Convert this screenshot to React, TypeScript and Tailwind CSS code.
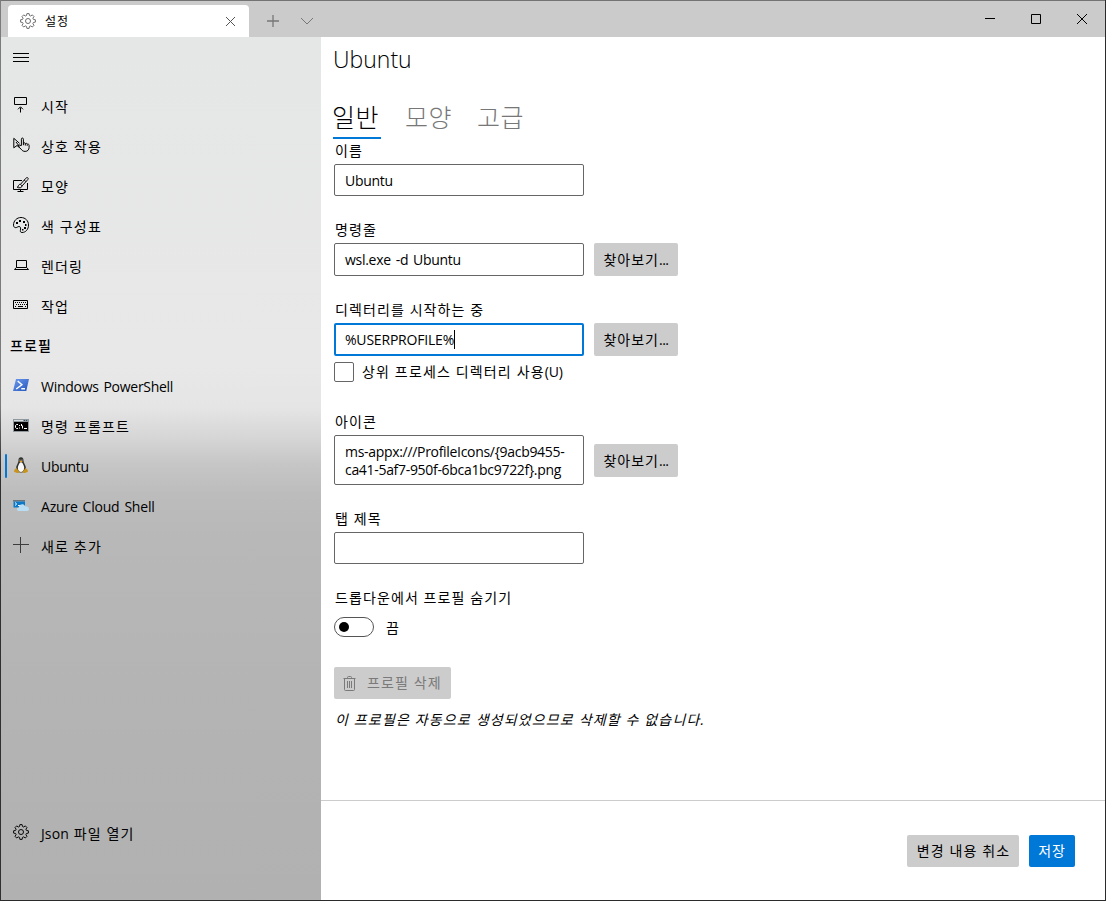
import type { ReactNode } from "react";

const Gear = () => (
  <svg width="16" height="16" viewBox="0 0 16 16" fill="none" stroke="currentColor" strokeWidth="0.95" strokeLinejoin="round">
    <path d="M6.9 .6h2.2l.4 1.9 1.2.5 1.6-1.1 1.7 1.7-1.1 1.6.5 1.2 2 .4v2.3l-2 .4-.5 1.2 1.1 1.6-1.7 1.7-1.6-1.1-1.2.5-.4 2H6.900l-.4-2-1.200-.5L3.700 14 2 12.300l1.100-1.600-.5-1.200-2-.4V6.800l2-.4.5-1.200L2 3.600l1.700-1.700L5.300 3l1.200-.5z" />
    <circle cx="8" cy="8" r="2.500" />
  </svg>
);

const Startup = () => (
  <svg width="16" height="16" viewBox="0 0 16 16" fill="none" stroke="currentColor">
    <path d="M1.500 0.500h12v7h-12zM7.500 15.500v-5M5 12.300l2.500-2.500 2.500 2.500" />
  </svg>
);

const Interaction = () => (
  <svg width="17" height="16" viewBox="0 0 17 16" fill="none" stroke="currentColor" strokeWidth="1" strokeLinejoin="round">
    <path d="M6 10.500 4.200 8.400.8 10.800V1.300l5.700 5" />
    <path d="m3 5 3.500 4.500" />
    <path d="M8.400 8.500V2.200c0-1.600 2-1.600 2 0v4c.6-.7 1.800-.4 1.900.4.700-.6 1.800-.3 1.900.6.900-.4 1.900.1 1.900 1.100v2.200c0 2.300-1.600 3.900-4 3.900-1.900 0-3-.8-3.900-2.200L5.300 9.500c-.8-1.300.8-2.200 1.700-1.200z" />
    <path d="M10.400 6v2.200M12.300 6.800v1.700M14.200 7.500v1.300" />
  </svg>
);

const Appearance = () => (
  <svg width="16" height="16" viewBox="0 0 16 16" fill="none" stroke="currentColor">
    <path d="M9 3.500H.5v9h14V6M7.500 12.500v2M4.500 14.500h6" />
    <path d="M14.900.9c-.7-.7-1.500-.2-2.100.4L7.500 7.300l1.600 1.600 5.500-6.100c.5-.6.900-1.300.3-1.900zM7.500 7.300c-1.500-.1-2 1-2.200 1.900-.1.700-.5.900-1.100 1 1.800 1.200 4.700.7 4.900-1.300M11.300 3.100l1.600 1.600" />
  </svg>
);

const Palette = () => (
  <svg width="16" height="16" viewBox="0 0 16 16" fill="none" stroke="currentColor">
    <path d="M8 .5c4.300 0 7.500 3.200 7.500 7.500S12.800 15.500 9 15.500c-1.500 0-1.900-1-1.600-2.100.5-1.800.3-3.900-1.300-3.900-1.500 0-2.400 1.500-3.900 1.100C.9 10.200.5 9.200.5 8 .5 3.800 3.800.5 8 .5z" />
    <g fill="currentColor" stroke="none">
      <rect x="3" y="5" width="2" height="2" /><rect x="6" y="3" width="2" height="2" /><rect x="10" y="4" width="2" height="2" />
      <rect x="12" y="7" width="1.500" height="2" /><rect x="11" y="10" width="2" height="2" /><rect x="9" y="12" width="1.500" height="1.500" />
    </g>
  </svg>
);

const Laptop = () => (
  <svg width="16" height="16" viewBox="0 0 16 16" fill="none" stroke="currentColor">
    <path d="M3.500 10.500v-7h10v7M3.300 10.500h10.400l1.800 2H1.500z" />
  </svg>
);

const Keyboard = () => (
  <svg width="16" height="16" viewBox="0 0 16 16" fill="none" stroke="currentColor">
    <path d="M.5 3.500h14v8H.5z" />
    <path d="M2 5.500h12M3 7.500h11" strokeDasharray="1 1" />
    <path d="M2 9.500h1M5 9.500h5M12 9.500h1" />
  </svg>
);

const PowerShell = () => (
  <svg width="16" height="16" viewBox="0 0 16 16">
    <defs>
      <linearGradient id="ps" x1="0" y1="0" x2="1" y2="1">
        <stop offset="0" stopColor="#6e9aee" /><stop offset="1" stopColor="#2356bd" />
      </linearGradient>
    </defs>
    <path d="M3 2h13L13.300 14H0z" fill="url(#ps)" />
    <path d="m4.700 4 4.200 3.800L3.200 12M8.300 11.800h3.700" fill="none" stroke="#fff" strokeWidth="1.400" />
  </svg>
);

const Cmd = () => (
  <svg width="16" height="16" viewBox="0 0 16 16" fill="none">
    <rect y="2" width="16" height="13" fill="#8e989d" />
    <path d="M1 3.500h9" stroke="#d7dcdf" /><path d="M11 3.500h1M13 3.500h1" stroke="#31526b" />
    <rect x="1" y="5" width="14" height="9" fill="#000" />
    <path d="M5 7.500H3.500L2.500 8.500v2l1 1H5M6.500 8v1M6.500 10.500v1M8.500 7v2M9.500 8.500v3M11 11.500h3" stroke="#fff" />
  </svg>
);

const Penguin = () => (
  <svg width="16" height="17" viewBox="0 0 16 17">
    <path d="M8 .3c-1.900 0-2.700 1.400-2.500 3.500.2 2-2.500 4.500-2.500 8C3 14.500 5 15.500 8 15.500s5-1 5-3.700c0-3.500-2.600-5.700-2.500-8C10.600 1.600 9.900.3 8 .3z" fill="#30322f" />
    <path d="M8 5.300c-1.500 0-2 2-2.900 4-.8 2.500.4 5.700 2.900 5.700s3.700-3 2.900-5.700C10.100 7.300 9.500 5.300 8 5.300z" fill="#f8f8f8" />
    <path d="m6.200 4.300 1.800-.9 1.800.9L8 5.600z" fill="#eaa819" />
    <circle cx="6.900" cy="3" r=".55" fill="#ddd" /><circle cx="9" cy="3" r=".55" fill="#ddd" />
    <path d="M3.200 10.700 6 14.300c.5 1.200-.5 2-1.800 1.700L1.500 15c-.8-.3-.2-1.300-.1-2 .1-.8 1-.8 1.800-2.300zM12.800 10.700 10 14.300c-.5 1.200.5 2 1.800 1.700l2.700-1c.8-.3.2-1.300.1-2-.1-.8-1-.8-1.800-2.300z" fill="#c99419" />
  </svg>
);

const Azure = () => (
  <svg width="16" height="16" viewBox="0 0 16 16">
    <path d="M0 3h12v1.500H0z" fill="#6b7478" /><path d="M.5 4.500H12v6H.5z" fill="#0b78c8" />
    <path d="m2 5.500 1.700 1.500L2 8.500M5 8.500h2" fill="none" stroke="#fff" />
    <path d="M6.300 14c-3 0-3-3.300-.5-3.500C6 7 11 6.200 12 9.300c2.400-.1 4 1 4 2.600 0 1.300-1 2.100-2.500 2.100z" fill="#b9ddf2" />
  </svg>
);

const Plus = () => (
  <svg width="16" height="16" viewBox="0 0 16 16" stroke="#3c3c3c"><path d="M0 7.500h16M7.500 0v16" /></svg>
);

const Trash = () => (
  <svg width="13" height="15" viewBox="0 0 13 15" fill="none" stroke="currentColor">
    <path d="M.5 2.500h12M4.500 2.500v-1q0-1 1-1h2q1 0 1 1v1M1.500 2.500v11q0 1 1 1h8q1 0 1-1v-11M4.500 5v7M6.500 5v7M8.500 5v7" />
  </svg>
);

function NavItem({ icon, label, latin, active }: { icon: ReactNode; label: ReactNode; latin?: boolean; active?: boolean }) {
  return (
    <div className="flex h-10 items-center">
      <span className={active ? "ml-1 h-6 w-0.5 rounded-full bg-[#0078d7]" : "ml-1 h-6 w-0.5"} />
      <span className="mb-0.5 ml-1.5 flex w-7 items-center">{icon}</span>
      <span className={latin ? "mt-px tracking-[-0.28px] [word-spacing:1.5px]" : "tracking-[1.15px]"}>{label}</span>
    </div>
  );
}

function Browse() {
  return (
    <button className="h-[33px] w-[84px] rounded-[2px] bg-[#cccccc]">
      <span className="tracking-[1px]">찾아보기</span><span className="tracking-[-0.5px]">...</span>
    </button>
  );
}

const label = "h-5 pl-px leading-5 tracking-[1.1px]";
const box = "flex w-[250px] items-center rounded-[2px] border border-[#666666] bg-white px-2.5 tracking-[-0.28px] whitespace-nowrap [word-spacing:1.5px]";

export default function App() {
  return (
    <div className="flex h-[901px] w-[1106px] bg-[#2b2b2e] font-['Open_Sans','Noto_Sans_CJK_KR',sans-serif] text-[14px] text-black">
      <div className="w-px bg-linear-to-b from-[#7b7b7b] from-45% to-[#303033] to-52%" />
      <div className="flex h-[900px] w-[1104px] flex-col">
        <header className="flex h-[37px] shrink-0 items-end border-t border-[#737373] bg-[#cbcbcb]">
          <div className="ml-[7px] flex h-8 w-[241px] items-center rounded-t-[4px] bg-white px-3">
            <span className="text-[#666]"><Gear /></span>
            <span className="mt-0.5 ml-[9px] flex-1 text-[12px] tracking-[0.9px]">설정</span>
            <svg className="mr-px" width="11" height="11" viewBox="0 0 11 11" stroke="#555"><path d="m1 1 9 9M10 1l-9 9" /></svg>
          </div>
          <svg className="mb-2.5 ml-[18px]" width="12" height="12" viewBox="0 0 12 12" stroke="#777" strokeWidth="1.300"><path d="M0 6h12M6 0v12" /></svg>
          <svg className="mb-2.5 ml-[22px]" width="12" height="12" viewBox="0 0 12 12" fill="none" stroke="#777"><path d="m0 3 6 6 6-6" /></svg>
          <div className="mr-[18px] mb-[13px] ml-auto flex items-center gap-9">
            <svg width="10" height="10" viewBox="0 0 10 10" stroke="#000"><path d="M0 4.500h10" /></svg>
            <svg width="10" height="10" viewBox="0 0 10 10" fill="none" stroke="#000"><path d="M.5.5h9v9h-9z" /></svg>
            <svg width="10" height="10" viewBox="0 0 10 10" stroke="#000"><path d="m0 0 10 10M10 0 0 10" /></svg>
          </div>
        </header>

        <div className="flex flex-1">
          <nav className="flex w-80 flex-col bg-[linear-gradient(180deg,#e5e6e6_0%,#e8e8e8_38%,#e5e5e5_43%,#d8d8d8_46%,#c6c6c6_49.500%,#bcbcbc_53%,#b8b8b8_58%,#b4b4b4_75%,#b1b1b1_100%)]">
            <svg className="mt-[15px] ml-3" width="16" height="11" viewBox="0 0 16 11" stroke="#000"><path d="M0 1.500h16M0 5.500h16M0 9.500h16" /></svg>
            <div className="mt-[23px]">
              <NavItem icon={<Startup />} label="시작" />
              <NavItem icon={<Interaction />} label="상호 작용" />
              <NavItem icon={<Appearance />} label="모양" />
              <NavItem icon={<Palette />} label="색 구성표" />
              <NavItem icon={<Laptop />} label="렌더링" />
              <NavItem icon={<Keyboard />} label="작업" />
              <div className="flex h-10 items-center pb-px pl-[9px] font-medium tracking-[1.1px]">프로필</div>
              <NavItem icon={<PowerShell />} label="Windows PowerShell" latin />
              <NavItem icon={<Cmd />} label="명령 프롬프트" />
              <NavItem icon={<Penguin />} label="Ubuntu" latin active />
              <NavItem icon={<Azure />} label={<span className="tracking-[-0.2px]">Azure Cloud Shell</span>} latin />
              <NavItem icon={<Plus />} label="새로 추가" />
            </div>
            <div className="mt-auto mb-[47px]">
              <NavItem icon={<Gear />} label={<><span className="tracking-[0.1px]">Json</span> 파일 열기</>} />
            </div>
          </nav>

          <div className="flex flex-1 flex-col bg-white">
            <main className="h-[763px] pl-[13px]">
              <h1 className="ml-[-1px] pt-1.5 text-[23px] leading-8 font-[350]">Ubuntu</h1>
              <div className="mt-[23px] ml-[-2px] flex gap-6 text-[25px] leading-[38px] font-light tracking-[0.6px] text-[#777]">
                <div className="ml-px h-[41px] w-12 border-b-2 border-[#0078d7] text-black"><span className="-ml-px">일반</span></div>
                <div className="w-12">모양</div>
                <div className="w-12">고급</div>
              </div>

              <div className={`${label} mt-0.5`}>이름</div>
              <div className={`${box} mt-[3px] h-8`}>Ubuntu</div>

              <div className={`${label} mt-6`}>명령줄</div>
              <div className="mt-[3px] flex gap-2.5">
                <div className={`${box} h-[33px]`}>wsl.exe -d Ubuntu</div>
                <Browse />
              </div>

              <div className={`${label} mt-6`}>디렉터리를 시작하는 중</div>
              <div className="mt-[3px] flex gap-2.5">
                <div className="flex h-[33px] w-[250px] items-center rounded-[2px] border-2 border-[#0078d7] px-[9px]">
                  <span className="tracking-[-0.2px]">%USERPROFILE%</span>
                  <span className="h-[19px] w-px bg-black" />
                </div>
                <Browse />
              </div>
              <div className="mt-1.5 flex h-5 items-center">
                <span className="size-5 rounded-[2px] border border-[#666]" />
                <span className="mb-0.5 ml-2 tracking-[1.15px]">상위 프로세스 디렉터리 사용<span className="tracking-[-0.2px]">(U)</span></span>
              </div>

              <div className={`${label} mt-[30px]`}>아이콘</div>
              <div className="mt-[3px] flex items-center gap-2.5">
                <div className={`${box} h-[50px] pt-0.5 leading-[18px]`}>
                  <span className="tracking-[-0.31px]">ms-appx:///ProfileIcons/&#123;9acb9455-<br />ca41-5af7-950f-6bca1bc9722f&#125;.png</span>
                </div>
                <Browse />
              </div>

              <div className={`${label} mt-6`}>탭 제목</div>
              <div className={`${box} mt-[3px] h-8`} />

              <div className={`${label} mt-6`}>드롭다운에서 프로필 숨기기</div>
              <div className="mt-[9px] flex h-5 items-center">
                <span className="flex h-5 w-10 items-center rounded-full border border-[#555] pl-1">
                  <span className="size-2.5 rounded-full bg-black" />
                </span>
                <span className="ml-3">끔</span>
              </div>

              <button className="mt-[30px] flex h-8 w-[117px] items-center rounded-[2px] bg-[#cccccc] pl-[9px] tracking-[1.1px] text-[#7a7a7a]">
                <Trash />
                <span className="mb-0.5 ml-[11px]">프로필 삭제</span>
              </button>
              <p className="mt-[11px] h-5 pl-px leading-5 tracking-[1.15px] italic">이 프로필은 자동으로 생성되었으므로 삭제할 수 없습니다.</p>
            </main>
            <footer className="flex flex-1 items-start justify-end gap-2.5 border-t border-[#cccccc] pt-[34px] pr-[30px]">
              <button className="h-8 w-28 rounded-[2px] bg-[#cccccc] pb-px pl-px tracking-[1.1px]">변경 내용 취소</button>
              <button className="h-8 w-[46px] rounded-[2px] bg-[#0078d7] pb-px tracking-[0.9px] text-white">저장</button>
            </footer>
          </div>
        </div>
      </div>
    </div>
  );
}
